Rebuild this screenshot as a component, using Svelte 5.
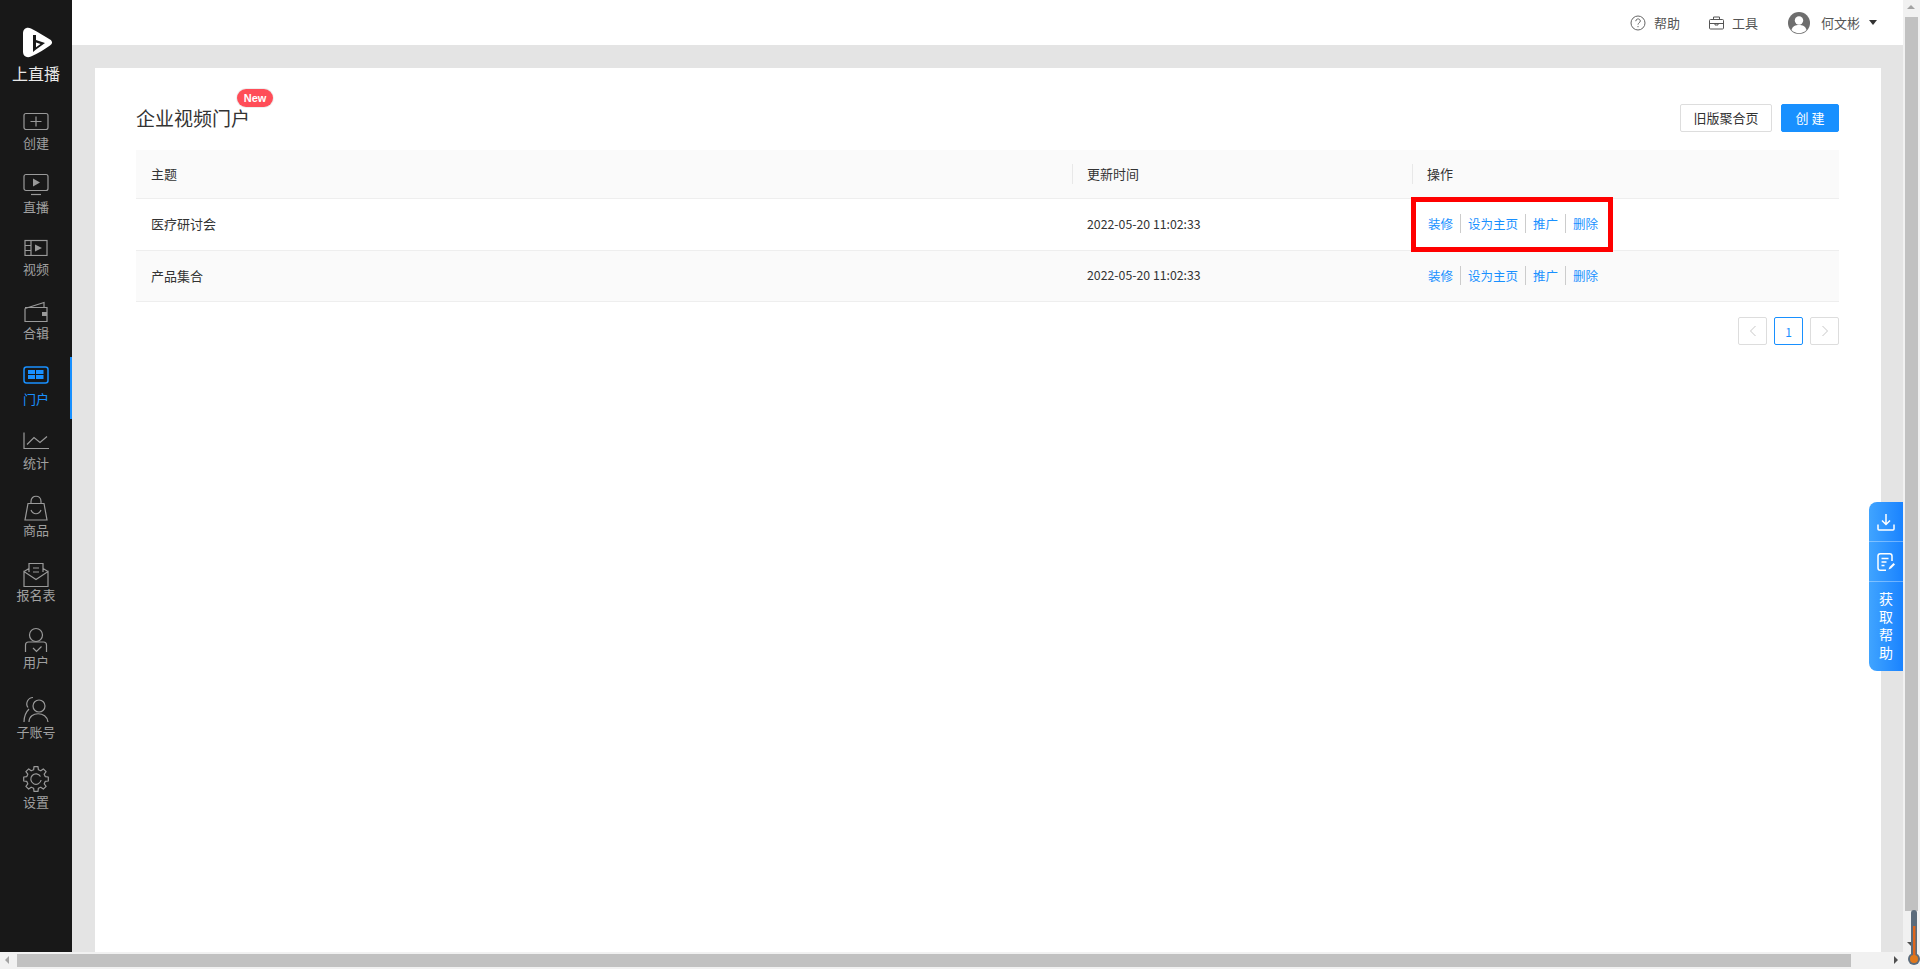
<script>
  const nav = [
    { key: "create", label: "创建", h: 70, mb: 3 },
    { key: "live", label: "直播", h: 64, mb: 1 },
    { key: "video", label: "视频", h: 62, mb: 3 },
    { key: "album", label: "合辑", h: 64, mb: 0 },
    { key: "portal", label: "门户", h: 66, mb: 5, active: true },
    { key: "stats", label: "统计", h: 64, mb: 3 },
    { key: "goods", label: "商品", h: 67, mb: -1 },
    { key: "form", label: "报名表", h: 65, mb: -3 },
    { key: "user", label: "用户", h: 67, mb: -1 },
    { key: "sub", label: "子账号", h: 70, mb: -3 },
    { key: "settings", label: "设置", h: 70, mb: -1 }
  ];

  const rows = [
    { name: "医疗研讨会", time: "2022-05-20 11:02:33" },
    { name: "产品集合", time: "2022-05-20 11:02:33" }
  ];

  const actions = ["装修", "设为主页", "推广", "删除"];

  // gear outline for the settings entry
  function gearPath(cx, cy, outer, inner, teeth) {
    const pts = [];
    const step = (Math.PI * 2) / teeth;
    for (let i = 0; i < teeth; i++) {
      const a = i * step - Math.PI / 2;
      const list = [
        [a - step * 0.2, outer],
        [a + step * 0.2, outer],
        [a + step * 0.32, inner],
        [a + step * 0.68, inner]
      ];
      for (const [t, r] of list) {
        pts.push((cx + Math.cos(t) * r).toFixed(1) + " " + (cy + Math.sin(t) * r).toFixed(1));
      }
    }
    return "M" + pts.join("L") + "Z";
  }

  const gear = gearPath(20, 16, 12.5, 9.5, 8);
</script>

<div class="frame">
  <div class="page">
    <aside class="sidebar">
      <div class="logo">
        <svg width="34" height="31" viewBox="0 0 34 31">
          <path d="M5 6.500C5 1.500 9 -.5 13 1.500C20 5 27 9.500 32 12.500C34.700 14.300 34.700 16.700 32 18.500C27 22 20 26.500 13 29.500C9 31.300 5 29.500 5 24.500Z" fill="#fff" />
          <path d="M15 8h3v5l9 3-9 6.500-3 2.500z" fill="#181818" />
          <path d="M18 15.500l4.500 1.500-4.500 3.200z" fill="#fff" />
        </svg>
        <span>上直播</span>
      </div>
      <nav>
        {#each nav as item}
          <div class="nav-item" class:active={item.active} style="height:{item.h}px">
            <svg class="nav-icon" width="40" height="30" viewBox="0 0 40 30" style="margin-bottom:{item.mb}px">
              {#if item.key === "create"}
                <rect x="8" y="13.500" width="24" height="16" rx="2" />
                <path d="M20 16.500v10M14.500 21.500h11" />
              {:else if item.key === "live"}
                <rect x="8" y="8.500" width="24" height="16" rx="2" />
                <path class="fill" d="M17 12.500l7 4-7 4z" />
                <path d="M15 28.500h10" />
              {:else if item.key === "video"}
                <rect x="9" y="14.500" width="22" height="15" />
                <path d="M15 14.500v15M9 19.500h6M9 24.500h6" />
                <path class="fill" d="M19 18.500l7 3.500-7 3.500z" />
              {:else if item.key === "album"}
                <path d="M9 15.500l19-6v5M9 15.500v13h22v-14h-22" />
                <path class="fill" d="M26 19h5v4h-5z" />
              {:else if item.key === "portal"}
                <rect class="on" x="8" y="13" width="24" height="16" rx="2.500" />
                <path class="onfill" d="M12 16h7v4h-7zM20 16h7.500v4h-7.500zM12 21h7v4h-7zM20 21h7.500v4h-7.500z" />
              {:else if item.key === "stats"}
                <path d="M8 12.500v16h25" />
                <path d="M11 24.500l7-7 6 5 7-6" />
              {:else if item.key === "goods"}
                <path d="M12 12.500h16l3 16.500h-22z" />
                <path d="M15 12.500v-2c0-7 10-7 10 0v2M15 19c2 5 8 5 10 0" />
              {:else if item.key === "form"}
                <path d="M13 14v-8.500h14v8.500M8 13.500l5-3M32 13.500l-5-3" />
                <path d="M8 13.500v15h24v-15l-12 8z" />
                <path d="M17 10h6M17 14h6" />
              {:else if item.key === "user"}
                <circle cx="20" cy="12" r="6.500" />
                <path d="M9.500 29v-7q0-3 3-3h15q3 0 3 3v7" />
                <path d="M17 25l3.500 3.500 5-5" />
              {:else if item.key === "sub"}
                <path d="M17 2.500c-5 0-8 6-5 10M8 27c0-6 2-10 5-13" />
                <circle cx="23" cy="11" r="6" />
                <path d="M13 27c0-11 18-11 19 0" />
              {:else}
                <path d={gear} stroke-linejoin="round" />
                <path d="M24.500 13.500a5.200 5.200 0 1 0 .6 3.500" />
              {/if}
            </svg>
            <span>{item.label}</span>
          </div>
        {/each}
      </nav>
    </aside>

    <div class="content">
      <header class="topbar">
        <div class="top-link help-link">
          <svg width="16" height="16" viewBox="0 0 16 16" fill="none" stroke="#666">
            <circle cx="8" cy="8" r="7" />
            <path d="M5.800 6.200c0-3 4.500-3 4.500-.2 0 1.800-2.300 1.800-2.300 3.600" />
            <path d="M8 11v1.200" />
          </svg>
          <span>帮助</span>
        </div>
        <div class="top-link">
          <svg width="15" height="14" viewBox="0 0 15 14" fill="none" stroke="#555">
            <rect x=".5" y="3.500" width="14" height="9.500" rx="1" />
            <path d="M4.500 3.500v-2.500h6v2.500M.5 7.500h14M6 7.500v1.500h3v-1.500" />
          </svg>
          <span>工具</span>
        </div>
        <div class="user">
          <svg width="22" height="22" viewBox="0 0 22 22">
            <circle cx="11" cy="11" r="11" fill="#6e6e6e" />
            <circle cx="11" cy="8.500" r="4.200" fill="#fff" />
            <path d="M3.500 18c1-4 4-5 7.500-5s6.500 1 7.500 5c-4 4.200-11 4.200-15 0z" fill="#fff" />
          </svg>
          <span>何文彬</span>
          <i class="caret"></i>
        </div>
      </header>

      <main class="card">
        <div class="title-row">
          <h1>企业视频门户<span class="badge">New</span></h1>
          <div class="buttons">
            <button class="btn">旧版聚合页</button>
            <button class="btn primary">创 建</button>
          </div>
        </div>

        <div class="table">
          <div class="row head">
            <div class="cell">主题</div>
            <div class="cell"><span class="head-sep"></span>更新时间</div>
            <div class="cell"><span class="head-sep"></span>操作</div>
          </div>
          {#each rows as row, i}
            <div class="row" class:striped={i % 2 === 1}>
              <div class="cell">{row.name}</div>
              <div class="cell date">{row.time}</div>
              <div class="cell ops">
                {#each actions as action}
                  <span class="op">{action}</span>
                {/each}
                {#if i === 0}<span class="mark"></span>{/if}
              </div>
            </div>
          {/each}
        </div>

        <div class="pager">
          <span class="page-btn">
            <svg width="8" height="12" viewBox="0 0 8 12" fill="none" stroke="#c8c8c8"><path d="M6.500 1l-5 5 5 5" /></svg>
          </span>
          <span class="page-btn current">1</span>
          <span class="page-btn">
            <svg width="8" height="12" viewBox="0 0 8 12" fill="none" stroke="#c8c8c8"><path d="M1.500 1l5 5-5 5" /></svg>
          </span>
        </div>
      </main>

      <div class="help">
        <div class="help-cell">
          <svg width="20" height="20" viewBox="0 0 20 20" fill="none" stroke="#fff" stroke-width="1.500">
            <path d="M10 2v10M6 8.500l4 4 4-4M2 12.500v4.500c0 .8.400 1 1 1h14c.6 0 1-.2 1-1v-4.500" />
          </svg>
        </div>
        <div class="help-cell">
          <svg width="20" height="20" viewBox="0 0 20 20" fill="none" stroke="#fff" stroke-width="1.500">
            <path d="M16 9v-5c0-1.500-.8-2.300-2.300-2.300h-9.400c-1.500 0-2.300.8-2.300 2.300v12c0 1.500.8 2.300 2.300 2.300h5.700" />
            <path d="M5.500 6.500h7M5.500 10h5M5.500 13.500h3" />
            <path d="M12.500 17.500l1-2.500 4-4 1.500 1.500-4 4z" fill="#fff" stroke="none" />
          </svg>
        </div>
        <div class="help-text">获<br />取<br />帮<br />助</div>
      </div>
    </div>
  </div>

  <div class="scroll-y">
    <i class="arrow up"></i>
    <div class="thumb-y"></div>
    <i class="arrow down"></i>
  </div>
  <div class="scroll-x">
    <i class="arrow left"></i>
    <div class="thumb-x"></div>
    <i class="arrow right"></i>
  </div>
  <div class="corner"></div>

  <svg class="thermo" width="14" height="60" viewBox="0 0 14 60">
    <rect x="4" y="0" width="6" height="52" rx="3" fill="#5b6b7b" />
    <circle cx="7" cy="49" r="6" fill="#5b6b7b" />
    <rect x="6" y="16" width="2.400" height="34" fill="#e0661c" />
    <circle cx="7" cy="49" r="4" fill="#e0781c" />
  </svg>
</div>

<style>
  :global(body) {
    background: #e4e4e4;
    font-family: "Noto Sans CJK SC", "Noto Sans", sans-serif;
    overflow: hidden;
  }

  .frame {
    display: grid;
    grid-template-columns: 1fr 17px;
    grid-template-rows: 1fr 17px;
    width: 100vw;
    height: 100vh;
    position: relative;
    overflow: hidden;
  }

  .page {
    display: flex;
    min-height: 0;
    min-width: 0;
  }

  .sidebar {
    width: 72px;
    flex: none;
    background: #181818;
    color: #a0a0a0;
  }

  .logo {
    padding-top: 27px;
    display: flex;
    flex-direction: column;
    align-items: center;
    color: #e8e8e8;
    font-size: 16px;
    line-height: 20px;
  }

  .logo svg {
    display: block;
    margin: 0 0 5px -2px;
  }

  .nav-item {
    display: flex;
    flex-direction: column;
    align-items: center;
    justify-content: flex-end;
    position: relative;
    font-size: 13px;
    line-height: 20px;
  }

  .nav-item span {
    height: 20px;
    position: relative;
  }

  .nav-item.active {
    color: #1890ff;
  }

  .nav-item.active::after {
    content: "";
    position: absolute;
    right: 0;
    top: 14px;
    bottom: -10px;
    width: 2px;
    background: #1890ff;
  }

  .nav-icon {
    display: block;
    flex: none;
    fill: none;
    stroke: #9a9a9a;
    stroke-width: 1.200;
  }

  .nav-icon .fill {
    fill: #9a9a9a;
    stroke: none;
  }

  .nav-icon .on {
    stroke: #1890ff;
    stroke-width: 1.500;
  }

  .nav-icon .onfill {
    fill: #1890ff;
    stroke: none;
  }

  .content {
    flex: 1;
    min-width: 0;
    display: flex;
    flex-direction: column;
    position: relative;
  }

  .topbar {
    height: 45px;
    flex: none;
    background: #fff;
    display: flex;
    justify-content: flex-end;
    align-items: center;
    padding-right: 26px;
    font-size: 13px;
    color: #555;
  }

  .top-link {
    display: flex;
    align-items: center;
    gap: 8px;
    margin-right: 30px;
  }

  .help-link {
    margin-right: 29px;
  }

  .user {
    display: flex;
    align-items: center;
    gap: 11px;
  }

  .caret {
    border: 4px solid transparent;
    border-top: 5px solid #333;
    border-bottom: 0;
    margin-left: -2px;
  }

  .card {
    flex: 1;
    margin: 23px 22px 0 23px;
    background: #fff;
    padding: 0 42px 0 41px;
  }

  .title-row {
    height: 82px;
    display: flex;
    justify-content: space-between;
    align-items: flex-end;
    padding-bottom: 18px;
    box-sizing: border-box;
  }

  h1 {
    margin: 0;
    position: relative;
    font-size: 19px;
    font-weight: 400;
    line-height: 28px;
    color: #333;
  }

  .badge {
    position: absolute;
    left: 101px;
    top: -15px;
    width: 36px;
    height: 18px;
    border-radius: 9px;
    background: #ff4d58;
    box-shadow: 0 0 0 1px #eee;
    color: #fff;
    font: 700 11px/18px "Liberation Sans", sans-serif;
    text-align: center;
  }

  .buttons {
    display: flex;
    gap: 9px;
  }

  .btn {
    height: 28px;
    width: 92px;
    padding: 0;
    border: 1px solid #ddd;
    border-radius: 2px;
    background: #fff;
    color: #333;
    font: 13px/26px "Noto Sans CJK SC", sans-serif;
  }

  .btn.primary {
    width: 58px;
    border-color: #1890ff;
    background: #1890ff;
    color: #fff;
  }

  .row {
    display: grid;
    grid-template-columns: 936px 340px 1fr;
    height: 52px;
    border-bottom: 1px solid #eee;
    box-sizing: border-box;
    font-size: 13px;
    color: #333;
  }

  .row.head {
    height: 49px;
    background: #fafafa;
  }

  .row.striped {
    background: #fafafa;
    height: 51px;
  }

  .cell {
    display: flex;
    align-items: center;
    padding: 0 0 2px 15px;
    position: relative;
  }

  .date {
    font-size: 12.300px;
  }

  .head-sep {
    position: absolute;
    left: 0;
    top: 14px;
    height: 20px;
    width: 1px;
    background: #e8e8e8;
  }

  .ops {
    padding-left: 9px;
  }

  .op {
    color: #1890ff;
    font-size: 12.500px;
    padding: 0 7px;
    line-height: 19px;
    height: 19px;
    border-left: 1px solid #ccc;
  }

  .op:first-child {
    border-left: 0;
  }

  .mark {
    position: absolute;
    left: -1px;
    top: -2px;
    width: 192px;
    height: 45px;
    border: 5px solid #f00;
  }

  .pager {
    display: flex;
    justify-content: flex-end;
    gap: 7px;
    margin-top: 15px;
  }

  .page-btn {
    width: 29px;
    height: 28px;
    box-sizing: border-box;
    border: 1px solid #ddd;
    border-radius: 2px;
    display: flex;
    align-items: center;
    justify-content: center;
    font-size: 12px;
    color: #1890ff;
  }

  .page-btn.current {
    border-color: #1890ff;
  }

  .help {
    position: absolute;
    right: 0;
    top: 502px;
    width: 34px;
    height: 169px;
    border-radius: 8px 0 0 8px;
    background: linear-gradient(90deg, #40a4ff, #1a83ff);
    color: #fff;
  }

  .help-cell {
    height: 40px;
    display: flex;
    align-items: center;
    justify-content: center;
    border-bottom: 1px solid rgba(255, 255, 255, .35);
    box-sizing: border-box;
  }

  .help-text {
    font-size: 14px;
    line-height: 18px;
    text-align: center;
    padding-top: 7px;
  }

  .scroll-y {
    grid-row: 1;
    grid-column: 2;
    background: #f1f1f1;
    padding-top: 17px;
    position: relative;
  }

  .thumb-y {
    width: 13px;
    margin-left: 2px;
    height: 894px;
    background: #c1c1c1;
  }

  .scroll-x {
    grid-row: 2;
    grid-column: 1;
    background: #f1f1f1;
    padding: 2px 0 0 17px;
    position: relative;
  }

  .thumb-x {
    width: 1834px;
    height: 13px;
    background: #c1c1c1;
  }

  .corner {
    background: #f1f1f1;
  }

  .arrow {
    position: absolute;
    width: 0;
    height: 0;
    border: 4px solid transparent;
  }

  .arrow.up {
    top: 5px;
    left: 4px;
    border-bottom-color: #a3a3a3;
    border-top: 0;
  }

  .arrow.down {
    bottom: 6px;
    left: 4px;
    border-top-color: #505050;
    border-bottom: 0;
  }

  .arrow.left {
    left: 5px;
    top: 4px;
    border-right-color: #a3a3a3;
    border-left: 0;
  }

  .arrow.right {
    right: 5px;
    top: 4px;
    border-left-color: #505050;
    border-right: 0;
  }

  .thermo {
    position: absolute;
    left: 1907px;
    top: 910px;
  }
</style>
